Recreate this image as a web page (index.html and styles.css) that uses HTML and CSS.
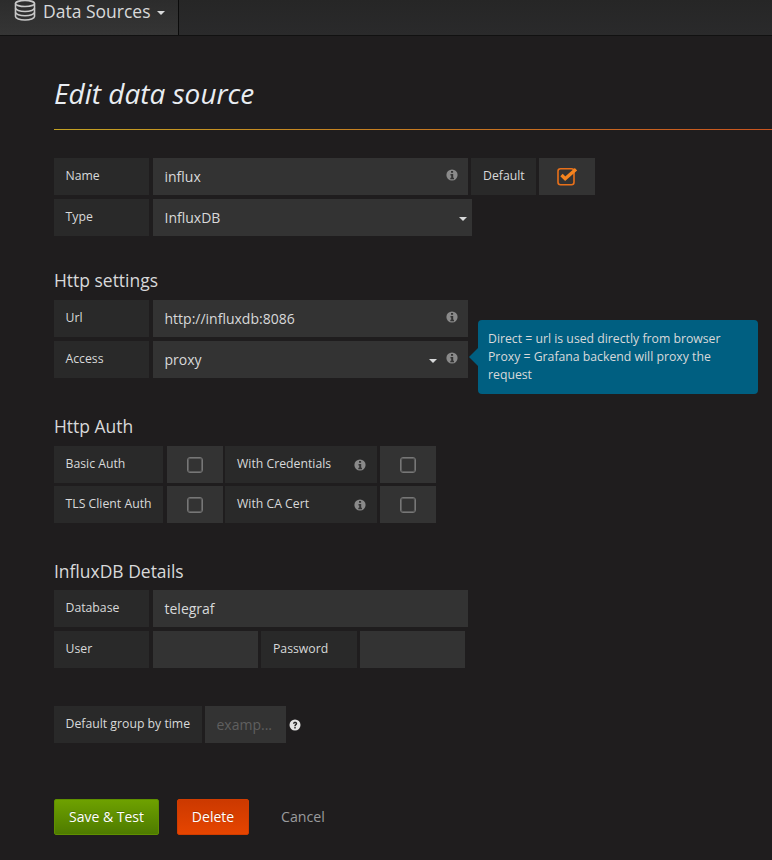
FILE: index.html
```html
<!DOCTYPE html>
<html lang="en">
<head>
<meta charset="utf-8">
<title>Edit data source</title>
<link rel="stylesheet" href="styles.css">
</head>
<body>
<svg class="defs" width="0" height="0" aria-hidden="true">
  <symbol id="info" viewBox="0 0 12 12"><circle cx="6" cy="6" r="5.600" fill="currentColor"/><path d="M5 2h2.100v1.800H5zM4.500 5h2.700v3.700h.8V10.200H4.300V8.700h.9V6.500h-.7z" fill="#333"/></symbol>
</svg>
<nav class="navbar">
  <div class="nav-item">
    <svg class="db-icon" viewBox="0 0 22 21" fill="none" stroke="currentColor" stroke-width="1.600">
      <ellipse cx="11" cy="3.500" rx="9.500" ry="3"/>
      <path d="M1.500 3.500v13c0 1.900 4.200 3.500 9.500 3.500s9.500-1.600 9.500-3.500v-13"/>
      <path d="M1.500 8c0 1.900 4.200 3.500 9.500 3.500s9.500-1.600 9.500-3.500"/>
      <path d="M1.500 12.300c0 1.900 4.200 3.500 9.500 3.500s9.500-1.600 9.500-3.500"/>
    </svg>
    <span>Data Sources</span>
    <i class="caret"></i>
  </div>
</nav>
<main class="page">
  <h1 class="title">Edit data source</h1>

  <div class="form">
    <div class="row">
      <label class="lbl w95">Name</label>
      <div class="field w315">influx<svg class="info"><use href="#info"/></svg></div>
      <label class="lbl w65">Default</label>
      <div class="box w56"><svg class="checked" viewBox="0 0 21 19" fill="none"><rect x="1" y="1.800" width="16" height="16" rx="2.500" stroke="#e8701a" stroke-width="1.600"/><path d="M4.500 8l3.700 3.700L19 2.200" stroke="#f5841f" stroke-width="3.400"/></svg></div>
    </div>
    <div class="row">
      <label class="lbl w95">Type</label>
      <div class="field w319">InfluxDB<i class="caret small end"></i></div>
    </div>
  </div>

  <h2 class="section s-http">Http settings</h2>
  <div class="form">
    <div class="row">
      <label class="lbl w95">Url</label>
      <div class="field w315">http://influxdb:8086<svg class="info"><use href="#info"/></svg></div>
    </div>
    <div class="row">
      <label class="lbl w95">Access</label>
      <div class="field w315">proxy<i class="caret small before-info"></i><svg class="info"><use href="#info"/></svg></div>
      <div class="tooltip">Direct = url is used directly from browser<br>Proxy = Grafana backend will proxy the request</div>
    </div>
  </div>

  <h2 class="section s-auth">Http Auth</h2>
  <div class="form tight">
    <div class="row">
      <label class="lbl w109">Basic Auth</label>
      <div class="box w56 snug"><i class="check"></i></div>
      <label class="lbl w152 spread">With Credentials<svg class="info"><use href="#info"/></svg></label>
      <div class="box w56"><i class="check"></i></div>
    </div>
    <div class="row">
      <label class="lbl w109">TLS Client Auth</label>
      <div class="box w56 snug"><i class="check"></i></div>
      <label class="lbl w152 spread">With CA Cert<svg class="info"><use href="#info"/></svg></label>
      <div class="box w56"><i class="check"></i></div>
    </div>
  </div>

  <h2 class="section s-details">InfluxDB Details</h2>
  <div class="form">
    <div class="row">
      <label class="lbl w95">Database</label>
      <div class="field w315">telegraf</div>
    </div>
    <div class="row">
      <label class="lbl w95">User</label>
      <div class="field w105"></div>
      <label class="lbl w96">Password</label>
      <div class="field w105"></div>
    </div>
  </div>

  <div class="row group-row">
    <label class="lbl w148">Default group by time</label>
    <div class="field w81 placeholder">examp...</div>
    <svg class="help" viewBox="0 0 12 12"><circle cx="6" cy="6" r="5.500" fill="#e3e3e3"/><path d="M4 4.700c0-2.600 4.200-2.600 4.200-.1 0 1.500-1.500 1.500-1.500 2.700H5.300c0-1.900 1.400-1.800 1.400-2.700 0-.8-1.200-.8-1.300.1zM5.300 8h1.400v1.400H5.300z" fill="#222"/></svg>
  </div>

  <div class="actions">
    <button class="btn save">Save &amp; Test</button>
    <button class="btn danger">Delete</button>
    <a class="cancel">Cancel</a>
  </div>
</main>
</body>
</html>
```
FILE: styles.css
```css
* { box-sizing: border-box; }
html, body { margin: 0; padding: 0; }
body {
  width: 772px;
  height: 860px;
  overflow: hidden;
  background: #1f1d1e;
  color: #d8d9da;
  font-family: "Open Sans", "Liberation Sans", sans-serif;
  font-size: 14px;
}
.defs { position: absolute; }
.navbar {
  height: 36px;
  background: linear-gradient(#262626, #2a2a2b);
  border-bottom: 1px solid #111;
}
.nav-item {
  width: 179px;
  height: 35px;
  display: flex;
  align-items: flex-start;
  padding-left: 14px;
  background: linear-gradient(#2c2c2c, #353535);
  border-right: 1px solid #0b0b0b;
  color: #d8d9da;
  font-size: 17.500px;
  line-height: 22px;
}
.db-icon { width: 22px; height: 21px; margin-right: 7px; flex: none; color: #c8c8c8; }
.caret {
  display: inline-block;
  border-left: 4px solid transparent;
  border-right: 4px solid transparent;
  border-top: 4px solid #d8d9da;
  margin-left: 6px;
  margin-top: 11px;
}
.page { padding: 0 0 0 54px; }
.title {
  margin: 0;
  height: 94px;
  padding-top: 38px;
  font-size: 28px;
  line-height: 38px;
  font-weight: 400;
  font-style: italic;
  color: #e9edf2;
  border-bottom: 1px solid;
  border-image: linear-gradient(to right, #c4a223, #c9541f) 1;
}
.form { display: flex; flex-direction: column; gap: 4px; margin-top: 28px; }
.form.tight { gap: 3px; }
.row { display: flex; height: 37px; gap: 3px; position: relative; }
.lbl {
  display: flex;
  align-items: center;
  padding: 0 0 2px 11.500px;
  background: #292929;
  color: #d8d9da;
  font-size: 12.250px;
  margin-right: 1px;
}
.spread { justify-content: space-between; padding-left: 12px; padding-right: 11px; }
.field {
  display: flex;
  align-items: center;
  position: relative;
  padding-left: 11.500px;
  background: #333;
  color: #d8d9da;
  font-size: 14px;
}
.box { display: flex; align-items: center; justify-content: center; background: #333; }
.snug { margin-right: -1px; }
.w95 { width: 95px; }
.w65 { width: 65px; margin-right: 0; padding-left: 12px; }
.w96 { width: 96px; margin-right: 0; padding-left: 12px; }
.w109 { width: 109px; }
.w148 { width: 148px; margin-right: 0; }
.w152 { width: 152px; margin-right: 0; }
.w56 { width: 56px; }
.w81 { width: 81px; }
.w105 { width: 105px; }
.w315 { width: 315px; }
.w319 { width: 319px; }
.info { position: absolute; right: 10px; top: 11px; width: 12px; height: 12px; color: #8a8a8a; }
.lbl .info { position: static; margin-top: 2px; color: #8a8a8a; }
.caret.small { position: absolute; margin: 0; }
.caret.end { right: 5px; top: 18px; }
.caret.before-info { right: 31px; top: 18px; }
.check { display: block; width: 16px; height: 16px; border: 1px solid #777; border-radius: 3px; box-shadow: inset 0 0 0 1px #5c5c5c; }
.checked { width: 21px; height: 19px; margin-left: 1px; }
.tooltip {
  position: absolute;
  left: 424px;
  top: -21px;
  width: 280px;
  height: 74px;
  padding: 10px 10px;
  background: #005f81;
  border-radius: 4px;
  color: #d8d9da;
  font-size: 12.250px;
  line-height: 18px;
}
.tooltip::before {
  content: "";
  position: absolute;
  left: -9px;
  top: 28px;
  border-top: 9px solid transparent;
  border-bottom: 9px solid transparent;
  border-right: 9px solid #005f81;
}
.section { margin: 0; font-size: 17.470px; font-weight: 400; line-height: 22px; color: #d8d9da; }
.s-http { margin-top: 33px; }
.s-http + .form { margin-top: 9px; }
.s-auth { margin-top: 37px; }
.s-auth + .form { margin-top: 9px; }
.s-details { margin-top: 37px; }
.s-details + .form { margin-top: 8px; }
.group-row { margin-top: 38px; }
.placeholder { color: #5f5f5f; }
.help { width: 12px; height: 12px; align-self: center; margin-top: 1px; }
.actions { display: flex; align-items: center; margin-top: 56px; }
.btn {
  height: 36px;
  border-radius: 2px;
  font-family: inherit;
  font-size: 14px;
  color: #fff;
  padding: 0 0 2px;
  text-shadow: 0 -1px 0 rgba(0,0,0,.2);
}
.save { width: 105px; background: linear-gradient(#6ea100, #4e7b00); border: 1px solid #5f8f00; }
.danger { width: 72px; margin-left: 18px; background: linear-gradient(#cc3900, #e64500); border: 1px solid #d13c00; }
.cancel { margin-left: 32px; color: #9a9b9d; font-size: 14.200px; margin-bottom: 2px; }
```
